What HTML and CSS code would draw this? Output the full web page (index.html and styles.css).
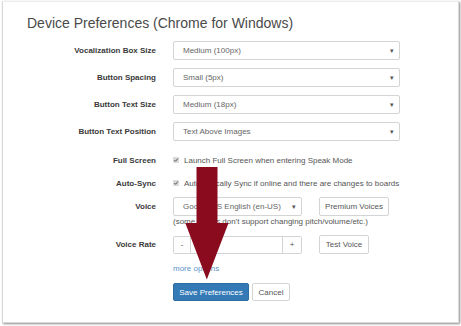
FILE: index.html
```html
<!DOCTYPE html>
<html>
<head>
<meta charset="utf-8">
<link rel="stylesheet" href="styles.css">
</head>
<body>
<div class="page">
  <div class="card">
    <h1 class="title">Device Preferences (Chrome for Windows)</h1>
    <div class="form">
      <div class="row row-select">
        <label class="label">Vocalization Box Size</label>
        <div class="select wide"><span>Medium (100px)</span><span class="caret">▾</span></div>
      </div>
      <div class="row row-select">
        <label class="label">Button Spacing</label>
        <div class="select wide"><span>Small (5px)</span><span class="caret">▾</span></div>
      </div>
      <div class="row row-select">
        <label class="label">Button Text Size</label>
        <div class="select wide"><span>Medium (18px)</span><span class="caret">▾</span></div>
      </div>
      <div class="row row-select">
        <label class="label">Button Text Position</label>
        <div class="select wide"><span>Text Above Images</span><span class="caret">▾</span></div>
      </div>
      <div class="row row-check first-check">
        <label class="label">Full Screen</label>
        <div class="check">
          <svg class="box" viewBox="0 0 6 6" width="6" height="6"><rect x="0" y="0" width="6" height="6" rx="1" fill="#d9d9d9"/><path d="M1.3 3.1 L2.5 4.3 L4.8 1.6" stroke="#444" stroke-width="0.9" fill="none"/></svg>
          <span>Launch Full Screen when entering Speak Mode</span>
        </div>
      </div>
      <div class="row row-check">
        <label class="label">Auto-Sync</label>
        <div class="check">
          <svg class="box" viewBox="0 0 6 6" width="6" height="6"><rect x="0" y="0" width="6" height="6" rx="1" fill="#d9d9d9"/><path d="M1.3 3.1 L2.5 4.3 L4.8 1.6" stroke="#444" stroke-width="0.9" fill="none"/></svg>
          <span>Automatically Sync if online and there are changes to boards</span>
        </div>
      </div>
      <div class="row row-voice">
        <label class="label">Voice</label>
        <div class="select narrow"><span>Google US English (en-US)</span><span class="caret">▾</span></div>
        <button class="btn btn-premium">Premium Voices</button>
      </div>
      <div class="row row-help">
        <span class="label"></span>
        <span class="help">(some voices don't support changing pitch/volume/etc.)</span>
      </div>
      <div class="row row-rate">
        <label class="label">Voice Rate</label>
        <div class="group">
          <span class="addon">-</span>
          <span class="group-input"></span>
          <span class="addon addon-plus">+</span>
        </div>
        <button class="btn btn-test">Test Voice</button>
      </div>
      <div class="row row-more">
        <span class="label"></span>
        <a class="more">more options</a>
      </div>
      <div class="row row-actions">
        <span class="label"></span>
        <div class="actions">
          <button class="btn btn-primary">Save Preferences</button>
          <button class="btn btn-cancel">Cancel</button>
        </div>
      </div>
    </div>
    <svg class="arrow" viewBox="0 0 44 113" width="44" height="113">
      <polygon points="11.5,0 32.5,0 32.5,56 43.5,56 21.8,112.5 0.3,56 11.5,56" fill="#8a0a1e"/>
    </svg>
  </div>
</div>
</body>
</html>
```

FILE: styles.css
```css
html, body {
  margin: 0;
  padding: 0;
  background: #ffffff;
}

body {
  font-family: "Liberation Sans", Arial, sans-serif;
  width: 461px;
  height: 326px;
  overflow: hidden;
}

.page {
  padding: 1px 0 0 2px;
}

.card {
  position: relative;
  box-sizing: border-box;
  width: 457px;
  height: 322px;
  background: #fff;
  border: 1px solid #d9d9d9;
  border-top-color: #ececec;
  box-shadow: 1px 1px 2px rgba(0, 0, 0, 0.45);
}

.title {
  margin: 13px 0 0 24px;
  font-size: 14px;
  line-height: 16px;
  font-weight: normal;
  color: #4a4a4a;
}

.form {
  margin-top: 10px;
  display: flex;
  flex-direction: column;
}

.row {
  display: flex;
  align-items: center;
  gap: 17px;
}

.label {
  width: 153px;
  flex: none;
  box-sizing: border-box;
  text-align: right;
  font-size: 8px;
  font-weight: bold;
  color: #3a3a3a;
}

.row-select {
  height: 19px;
  margin-bottom: 8px;
}

.row-check {
  height: 18px;
  margin-bottom: 5px;
}

.first-check {
  margin-top: 2px;
}

.row-voice {
  height: 19px;
}

.row-help {
  height: 11px;
  margin-bottom: 8px;
}

.row-rate {
  height: 19px;
  margin-bottom: 8px;
}

.row-more {
  height: 12px;
  margin-bottom: 8px;
}

.row-actions {
  height: 18px;
  margin-top: 1px;
}

.actions {
  display: flex;
  gap: 3px;
}

.select {
  box-sizing: border-box;
  height: 19px;
  border: 1px solid #d4d4d4;
  border-radius: 2px;
  display: flex;
  align-items: center;
  justify-content: space-between;
  padding: 0 5px 0 9px;
  font-size: 8px;
  color: #666;
  background: #fff;
}

.select.wide {
  width: 227px;
}

.select.narrow {
  width: 129px;
}

.caret {
  font-size: 7px;
  color: #555;
}

.check {
  display: flex;
  align-items: center;
  gap: 5px;
  font-size: 8px;
  color: #555;
}

.box {
  display: block;
  flex: none;
}

.help {
  font-size: 8px;
  color: #555;
}

.btn {
  box-sizing: border-box;
  font-family: "Liberation Sans", Arial, sans-serif;
  font-size: 8px;
  border: 1px solid #d4d4d4;
  border-radius: 2px;
  background: #fff;
  color: #555;
  padding: 0;
  height: 19px;
  cursor: pointer;
}

.btn-premium {
  width: 70px;
}

.btn-test {
  width: 50px;
}

.group {
  box-sizing: border-box;
  width: 129px;
  height: 18px;
  display: flex;
  border: 1px solid #d4d4d4;
  border-radius: 2px;
  font-size: 8px;
  color: #555;
}

.addon {
  width: 16px;
  display: flex;
  align-items: center;
  justify-content: center;
  background: #fdfdfd;
  border-right: 1px solid #d4d4d4;
}

.addon-plus {
  width: 18px;
  border-right: none;
  border-left: 1px solid #d4d4d4;
}

.group-input {
  flex: 1;
}

.more {
  font-size: 8px;
  color: #5b93c9;
}

.btn-primary {
  width: 76px;
  height: 18px;
  background: #337ab7;
  border-color: #2e6da4;
  color: #fff;
}

.btn-cancel {
  width: 38px;
  height: 18px;
}

.arrow {
  position: absolute;
  left: 182px;
  top: 165px;
}
```
